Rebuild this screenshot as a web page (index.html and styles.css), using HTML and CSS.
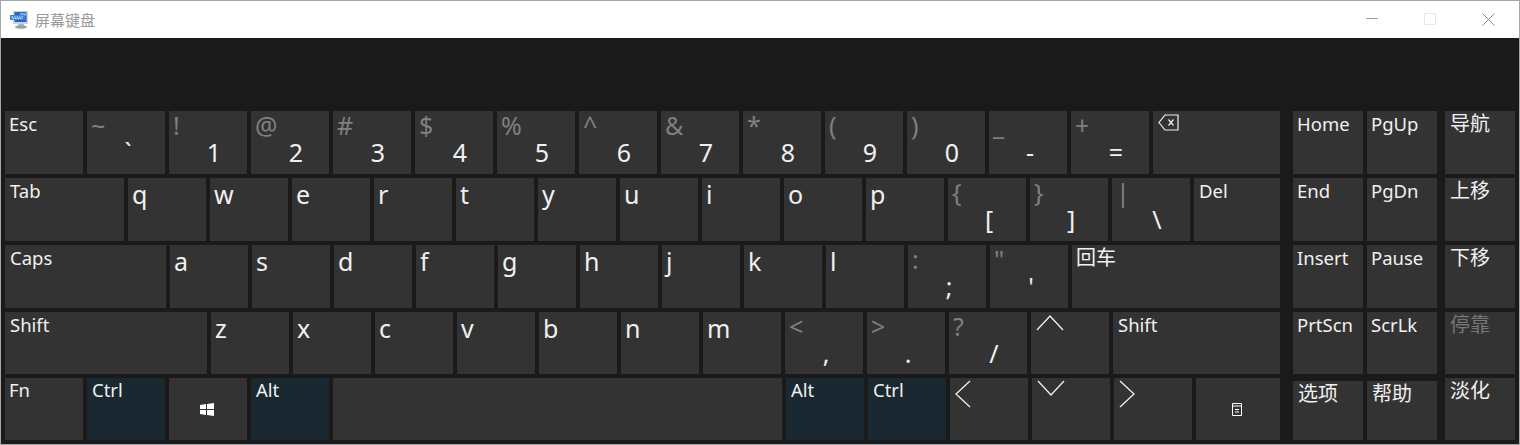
FILE: index.html
```html
<!DOCTYPE html>
<html>
<head>
    <title>屏幕键盘</title>
    <link rel="stylesheet" href="styles.css">
</head>
<body>
    <div class="window">
        <div class="titlebar">
            <svg class="app-icon" width="20" height="20" viewBox="0 0 20 20">
                <rect x="3" y="1" width="15" height="13" fill="#cdd4da"/>
                <rect x="4.5" y="2" width="12" height="10" fill="#2a63c4"/>
                <rect x="10" y="3" width="6" height="3" fill="#6fb2ea"/>
                <rect x="0" y="5" width="15" height="5" fill="#3d86d8"/>
                <path d="M1.5 7 H13.5 M2.5 8.5 H12.5" stroke="#e4f1fb" stroke-dasharray="1.5 1"/>
                <rect x="8" y="14" width="6" height="2" fill="#b3bac1"/>
                <ellipse cx="11" cy="17" rx="6" ry="1.8" fill="#9aa2aa"/>
            </svg>
            <span class="app-name">屏幕键盘</span>
            <div class="win-buttons">
                <svg width="13" height="13" viewBox="0 0 13 13"><path d="M0 5.5 H12" stroke="#a0a0a0"/></svg>
                <svg width="13" height="13" viewBox="0 0 13 13"><path d="M.5 .5 H11.5 V11.5 H.5 Z" fill="none" stroke="#e6e6e6"/></svg>
                <svg width="13" height="13" viewBox="0 0 13 13"><path d="M.5 .5 L12.5 12.5 M12.5 .5 L.5 12.5" stroke="#8c8c8c"/></svg>
            </div>
        </div>

        <div class="board">
            <div class="main-keys">
                <div class="row">
                    <div class="key tight">Esc</div>
                    <div class="key sym"><span class="up">~</span><span class="low tuck">`</span></div>
                    <div class="key sym"><span class="up">!</span><span class="low">1</span></div>
                    <div class="key sym"><span class="up">@</span><span class="low">2</span></div>
                    <div class="key sym"><span class="up">#</span><span class="low">3</span></div>
                    <div class="key sym"><span class="up">$</span><span class="low">4</span></div>
                    <div class="key sym"><span class="up">%</span><span class="low">5</span></div>
                    <div class="key sym"><span class="up">^</span><span class="low">6</span></div>
                    <div class="key sym"><span class="up">&amp;</span><span class="low">7</span></div>
                    <div class="key sym"><span class="up">*</span><span class="low">8</span></div>
                    <div class="key sym"><span class="up">(</span><span class="low">9</span></div>
                    <div class="key sym"><span class="up">)</span><span class="low">0</span></div>
                    <div class="key sym"><span class="up">_</span><span class="low tuck">-</span></div>
                    <div class="key sym"><span class="up">+</span><span class="low">=</span></div>
                    <div class="key grow">
                        <svg class="bksp" width="21" height="17" viewBox="0 0 21 17">
                            <path d="M20 1 H7 L1 8.5 L7 16 H20 Z M10.5 5.5 L15.5 11.5 M15.5 5.5 L10.5 11.5" fill="none" stroke="#f0f0f0" stroke-width="1.2"/>
                        </svg>
                    </div>
                </div>
                <div class="row">
                    <div class="key tab">Tab</div>
                    <div class="key letter">q</div>
                    <div class="key letter">w</div>
                    <div class="key letter">e</div>
                    <div class="key letter">r</div>
                    <div class="key letter">t</div>
                    <div class="key letter">y</div>
                    <div class="key letter">u</div>
                    <div class="key letter">i</div>
                    <div class="key letter">o</div>
                    <div class="key letter">p</div>
                    <div class="key sym"><span class="up">{</span><span class="low tuck">[</span></div>
                    <div class="key sym"><span class="up">}</span><span class="low tuck">]</span></div>
                    <div class="key sym"><span class="up">|</span><span class="low">\</span></div>
                    <div class="key grow">Del</div>
                </div>
                <div class="row">
                    <div class="key caps">Caps</div>
                    <div class="key letter">a</div>
                    <div class="key letter">s</div>
                    <div class="key letter">d</div>
                    <div class="key letter">f</div>
                    <div class="key letter">g</div>
                    <div class="key letter">h</div>
                    <div class="key letter">j</div>
                    <div class="key letter">k</div>
                    <div class="key letter">l</div>
                    <div class="key sym"><span class="up">:</span><span class="low tuck">;</span></div>
                    <div class="key sym"><span class="up">"</span><span class="low tuck">'</span></div>
                    <div class="key grow cjk tight">回车</div>
                </div>
                <div class="row short">
                    <div class="key shift">Shift</div>
                    <div class="key letter">z</div>
                    <div class="key letter">x</div>
                    <div class="key letter">c</div>
                    <div class="key letter">v</div>
                    <div class="key letter">b</div>
                    <div class="key letter">n</div>
                    <div class="key letter">m</div>
                    <div class="key sym"><span class="up">&lt;</span><span class="low tuck">,</span></div>
                    <div class="key sym"><span class="up">&gt;</span><span class="low tuck">.</span></div>
                    <div class="key sym"><span class="up">?</span><span class="low">/</span></div>
                    <div class="key">
                        <svg class="arrow" width="28" height="16" viewBox="0 0 28 16"><path d="M1 15 L14 1 L27 15" fill="none" stroke="#f0f0f0" stroke-width="1.3"/></svg>
                    </div>
                    <div class="key grow">Shift</div>
                </div>
                <div class="row short last-row">
                    <div class="key tight">Fn</div>
                    <div class="key on">Ctrl</div>
                    <div class="key icon-key">
                        <svg width="14" height="13" viewBox="0 0 14 13"><path d="M0 2 L6 1 V6 H0 Z M7 1 L14 0 V6 H7 Z M0 7 H6 V12 L0 11 Z M7 7 H14 V13 L7 12 Z" fill="#fff"/></svg>
                    </div>
                    <div class="key on">Alt</div>
                    <div class="key space"></div>
                    <div class="key on">Alt</div>
                    <div class="key on">Ctrl</div>
                    <div class="key">
                        <svg class="arrow" width="16" height="28" viewBox="0 0 16 28"><path d="M15 1 L1 14 L15 27" fill="none" stroke="#f0f0f0" stroke-width="1.3"/></svg>
                    </div>
                    <div class="key">
                        <svg class="arrow" width="28" height="16" viewBox="0 0 28 16"><path d="M1 1 L14 15 L27 1" fill="none" stroke="#f0f0f0" stroke-width="1.3"/></svg>
                    </div>
                    <div class="key">
                        <svg class="arrow" width="16" height="28" viewBox="0 0 16 28"><path d="M1 1 L15 14 L1 27" fill="none" stroke="#f0f0f0" stroke-width="1.3"/></svg>
                    </div>
                    <div class="key grow icon-key">
                        <svg width="10" height="13" viewBox="0 0 10 13"><path d="M.5 .5 H9.5 V12.5 H.5 Z M.5 3 H9.5 M3 6.5 H7 M3 9 H7" fill="none" stroke="#fff"/></svg>
                    </div>
                </div>
            </div>

            <div class="side-keys">
                <div class="row">
                    <div class="key nav">Home</div>
                    <div class="key nav">PgUp</div>
                    <div class="key nav last cjk">导航</div>
                </div>
                <div class="row">
                    <div class="key nav">End</div>
                    <div class="key nav">PgDn</div>
                    <div class="key nav last cjk">上移</div>
                </div>
                <div class="row">
                    <div class="key nav">Insert</div>
                    <div class="key nav">Pause</div>
                    <div class="key nav last cjk">下移</div>
                </div>
                <div class="row short">
                    <div class="key nav">PrtScn</div>
                    <div class="key nav">ScrLk</div>
                    <div class="key nav last off cjk">停靠</div>
                </div>
                <div class="row short">
                    <div class="key nav option cjk">选项</div>
                    <div class="key nav option cjk">帮助</div>
                    <div class="key nav last cjk">淡化</div>
                </div>
            </div>
        </div>
    </div>
</body>
</html>
```

FILE: styles.css
```css
html, body {
    margin: 0;
    height: 100%;
}

body {
    font-family: "Noto Sans", "Noto Sans CJK SC", sans-serif;
    background: #fff;
}

.window {
    box-sizing: border-box;
    height: 445px;
    border: 1px solid #a3a7ab;
    display: flex;
    flex-direction: column;
}

.titlebar {
    height: 37px;
    background: #fff;
    display: flex;
    align-items: center;
    padding-left: 9px;
}

.app-icon {
    margin-right: 5px;
}

.app-name {
    font-size: 15px;
    line-height: 36px;
    height: 36px;
    color: #999;
}

.win-buttons {
    margin-left: auto;
    display: flex;
    gap: 45px;
    padding-right: 24px;
}

.board {
    flex: 1;
    background: #1a1a1a;
    display: flex;
    padding: 73px 4px 0 4px;
}

.main-keys {
    width: 1275px;
    display: flex;
    flex-direction: column;
    gap: 4px;
}

.side-keys {
    width: 222px;
    margin-left: 13px;
    display: flex;
    flex-direction: column;
    gap: 4px;
}

.row {
    display: flex;
    gap: 4px;
    height: 63px;
}

.row.short {
    height: 62px;
}

.key {
    box-sizing: border-box;
    width: 78px;
    flex: none;
    background: #333;
    color: #f0f0f0;
    font-size: 18.5px;
    line-height: 24px;
    padding: 1px 5px;
}

.last-row .key {
    padding-top: 0;
}

.key.tight {
    padding-left: 4px;
}

.key.cjk {
    font-size: 20px;
}

.key.grow {
    flex: 1;
}

.key.tab {
    width: 119px;
}

.key.caps {
    width: 161px;
}

.key.shift {
    width: 202px;
}

.key.space {
    width: 449px;
}

.key.on {
    background: #1a2831;
}

.key.letter {
    font-size: 25px;
    line-height: 32px;
    padding-top: 0;
    padding-left: 4px;
}

.key.icon-key {
    display: flex;
    align-items: center;
    justify-content: center;
    padding: 0 8px 0 5px;
}

.key.nav {
    width: 70px;
    padding-left: 4px;
}

.key.nav.cjk {
    padding-left: 5px;
}

.key.nav.last {
    margin-left: 4px;
}

.key.option {
    margin-top: 3px;
}

.key.off {
    color: #777;
}

.sym {
    display: flex;
    flex-direction: column;
}

.sym .up {
    color: #808080;
    font-size: 25px;
    line-height: 26px;
    margin-left: -1px;
}

.sym .low {
    font-size: 25px;
    line-height: 28px;
    text-align: center;
    margin-left: 12px;
}

.sym .low.tuck {
    margin-left: 4px;
}

.bksp {
    display: block;
    margin-top: 2px;
}

.arrow {
    display: block;
    margin-top: 2px;
}
```
